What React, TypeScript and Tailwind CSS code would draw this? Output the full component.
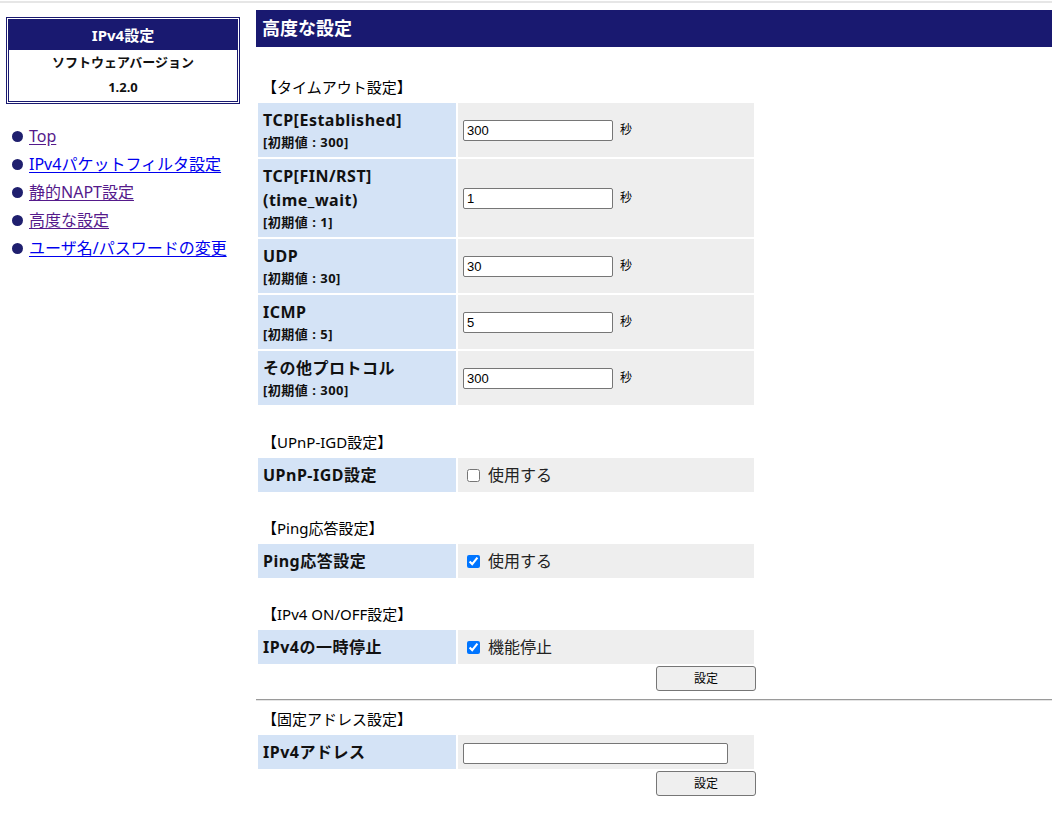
import { FC, ReactNode } from "react";

const NAVY = "bg-[#191970]";

interface NavLink {
    label: string;
    visited: boolean;
}

const navLinks: NavLink[] = [
    { label: "Top", visited: true },
    { label: "IPv4パケットフィルタ設定", visited: false },
    { label: "静的NAPT設定", visited: true },
    { label: "高度な設定", visited: true },
    { label: "ユーザ名/パスワードの変更", visited: false },
];

interface TimeoutRow {
    lines: string[];
    initial: string;
    value: string;
}

const timeoutRows: TimeoutRow[] = [
    { lines: ["TCP[Established]"], initial: "300", value: "300" },
    { lines: ["TCP[FIN/RST]", "(time_wait)"], initial: "1", value: "1" },
    { lines: ["UDP"], initial: "30", value: "30" },
    { lines: ["ICMP"], initial: "5", value: "5" },
    { lines: ["その他プロトコル"], initial: "300", value: "300" },
];

const SectionLabel: FC<{ children: ReactNode; className?: string }> = ({ children, className }) => (
    <div className={`h-[24px] leading-[24px] text-[15px] pl-[6px] mb-[2px] text-black ${className ?? ""}`}>
        {children}
    </div>
);

const LabelCell: FC<{ children: ReactNode }> = ({ children }) => (
    <td className="bg-[#d4e3f6] w-[198px] p-[5px] align-middle font-bold text-[16px] leading-[24px] tracking-[0.5px] text-[#111]">
        {children}
    </td>
);

const ValueCell: FC<{ children: ReactNode }> = ({ children }) => (
    <td className="bg-[#eeeeee] p-[5px] align-middle">{children}</td>
);

const TextBox: FC<{ value: string; width: string }> = ({ value, width }) => (
    <input
        type="text"
        defaultValue={value}
        className={`${width} h-[21px] border border-[#767676] rounded-[2px] bg-white px-[3px] text-[13px] text-black outline-none`}
        style={{ fontFamily: '"Liberation Sans", Arial, sans-serif' }}
    />
);

const CheckOption: FC<{ checked: boolean; label: string }> = ({ checked, label }) => (
    <label className="flex items-center text-[16px] leading-[24px] text-[#222]">
        <input
            type="checkbox"
            defaultChecked={checked}
            className="w-[13px] h-[13px] ml-[4px] mr-[8px] accent-[#0075ff]"
        />
        {label}
    </label>
);

const SetButton: FC = () => (
    <div className="flex justify-end">
        <button className="w-[100px] h-[25px] bg-[#efefef] border border-[#767676] rounded-[3px] text-[12px] text-black">
            設定
        </button>
    </div>
);

const Table: FC<{ children: ReactNode }> = ({ children }) => (
    <table className="w-[500px] border-separate border-spacing-[2px]">
        <tbody>{children}</tbody>
    </table>
);

export default function App() {
    return (
        <div
            className="min-h-[824px] bg-white text-black"
            style={{ fontFamily: '"Noto Sans", "Noto Sans CJK JP", sans-serif' }}
        >
            {/* Top rule */}
            <div className="pt-px">
                <div className="h-[2px] bg-[#e6e6e6]" />
            </div>

            <div className="flex pl-[6px] gap-[16px]">
                {/* Sidebar */}
                <aside className="w-[234px] shrink-0 pt-[14px]">
                    <div className="border-[3px] border-double border-[#191970]">
                        <div className={`${NAVY} h-[30px] flex items-center justify-center text-white font-bold text-[15px]`}>
                            IPv4設定
                        </div>
                        <div className="text-center font-bold text-[13px] leading-[25px] pb-[1px] text-[#111]">
                            <div>ソフトウェアバージョン</div>
                            <div>1.2.0</div>
                        </div>
                    </div>

                    <ul className="mt-[18px] flex flex-col">
                        {navLinks.map((link) => (
                            <li key={link.label} className="flex items-center h-[28px]">
                                <span className="w-[11px] h-[11px] rounded-full bg-[#1f1f6e] ml-[6px] mr-[6px] shrink-0" />
                                <a
                                    href="#"
                                    className={`text-[16px] underline underline-offset-[2px] ${link.visited ? "text-[#551a8b]" : "text-[#0000ee]"}`}
                                >
                                    {link.label}
                                </a>
                            </li>
                        ))}
                    </ul>
                </aside>

                {/* Main */}
                <main className="flex-1 pt-[7px] pb-[20px]">
                    <div className={`${NAVY} h-[37px] flex items-center pl-[6px] text-white font-bold text-[18px]`}>
                        高度な設定
                    </div>

                    {/* Timeout */}
                    <SectionLabel className="mt-[28px]">【タイムアウト設定】</SectionLabel>
                    <Table>
                        {timeoutRows.map((row) => (
                            <tr key={row.lines[0]}>
                                <LabelCell>
                                    {row.lines.map((line) => (
                                        <div key={line}>{line}</div>
                                    ))}
                                    <div className="text-[13px] leading-[20px]">[初期値 : {row.initial}]</div>
                                </LabelCell>
                                <ValueCell>
                                    <div className="flex items-center">
                                        <TextBox value={row.value} width="w-[150px]" />
                                        <span className="ml-[7px] text-[12px]">秒</span>
                                    </div>
                                </ValueCell>
                            </tr>
                        ))}
                    </Table>

                    {/* UPnP */}
                    <SectionLabel className="mt-[23px]">【UPnP-IGD設定】</SectionLabel>
                    <Table>
                        <tr>
                            <LabelCell>UPnP-IGD設定</LabelCell>
                            <ValueCell>
                                <CheckOption checked={false} label="使用する" />
                            </ValueCell>
                        </tr>
                    </Table>

                    {/* Ping */}
                    <SectionLabel className="mt-[22px]">【Ping応答設定】</SectionLabel>
                    <Table>
                        <tr>
                            <LabelCell>Ping応答設定</LabelCell>
                            <ValueCell>
                                <CheckOption checked={true} label="使用する" />
                            </ValueCell>
                        </tr>
                    </Table>

                    {/* IPv4 on/off */}
                    <SectionLabel className="mt-[22px]">【IPv4 ON/OFF設定】</SectionLabel>
                    <div className="w-[500px]">
                        <Table>
                            <tr>
                                <LabelCell>IPv4の一時停止</LabelCell>
                                <ValueCell>
                                    <CheckOption checked={true} label="機能停止" />
                                </ValueCell>
                            </tr>
                        </Table>
                        <SetButton />
                    </div>

                    <div className="mt-[8px] border-t border-t-[#9a9a9a] border-b border-b-[#e4e4e4]" />

                    {/* Fixed address */}
                    <SectionLabel className="mt-[6px]">【固定アドレス設定】</SectionLabel>
                    <div className="w-[500px]">
                        <Table>
                            <tr>
                                <LabelCell>IPv4アドレス</LabelCell>
                                <ValueCell>
                                    <TextBox value="" width="w-[265px]" />
                                </ValueCell>
                            </tr>
                        </Table>
                        <SetButton />
                    </div>
                </main>
            </div>
        </div>
    );
}
